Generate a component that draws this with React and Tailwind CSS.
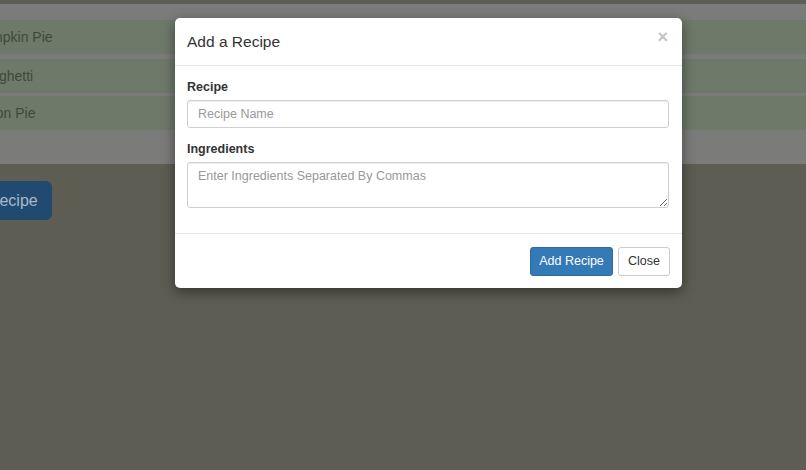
import React from "react";

export default function App() {
  const items = ["Pumpkin Pie", "Spaghetti", "Onion Pie"];
  return (
    <div
      className="relative w-[806px] h-[470px] overflow-hidden bg-[#5e5d53]"
      style={{ fontFamily: '"Liberation Sans", Arial, sans-serif' }}
    >
      {/* page behind the backdrop */}
      <div className="pt-[4px]">
        <div className="h-[160px] bg-[#7b7b7a] pt-[16px]">
          <div className="ml-[-38px] flex flex-col">
            {items.map((t, i) => (
              <div
                key={t}
                className={`h-[34px] flex items-center pl-[12px] bg-[#6e796a] text-[14px] text-[#3d4a39] ${
                  i === 0 ? "mb-[5px]" : i === 1 ? "mb-[3px]" : ""
                }`}
              >
                {t}
              </div>
            ))}
          </div>
        </div>
        <div className="mt-[17px] ml-[-59px]">
          <div className="inline-flex items-center h-[39px] px-[14px] rounded-[6px] bg-[#214a71] text-[16px] text-[#a8b9c9]">
            Add Recipe
          </div>
        </div>
      </div>

      {/* modal */}
      <div className="absolute left-[175px] top-[18px] w-[507px] bg-white rounded-[5px] shadow-[0_4px_13px_rgba(0,0,0,0.45)]">
        <div className="h-[48px] flex items-center justify-between px-[12px] border-b border-[#e5e5e5]">
          <div className="text-[15.5px] text-[#333] leading-none">Add a Recipe</div>
          <div className="text-[18px] font-bold text-[#c4c4c4] leading-none mt-[-9px] mr-[2px]">×</div>
        </div>
        <div className="px-[12px] pt-[13px] pb-[25px]">
          <div className="text-[12.5px] font-bold text-[#333] leading-[17px] mb-[4px]">Recipe</div>
          <input
            className="block w-[482px] h-[28px] border border-[#cfcfcf] rounded-[3px] px-[10px] text-[12.5px] text-[#555] placeholder:text-[#999] shadow-[inset_0_1px_1px_rgba(0,0,0,0.075)] outline-none"
            placeholder="Recipe Name"
          />
          <div className="text-[12.5px] font-bold text-[#333] leading-[17px] mt-[13px] mb-[4px]">Ingredients</div>
          <textarea
            className="block w-[482px] h-[46px] border border-[#cfcfcf] rounded-[3px] px-[10px] pt-[5px] text-[12.5px] leading-[17px] text-[#555] placeholder:text-[#999] shadow-[inset_0_1px_1px_rgba(0,0,0,0.075)] outline-none"
            placeholder="Enter Ingredients Separated By Commas"
          />
        </div>
        <div className="border-t border-[#e5e5e5] px-[12px] pt-[13px] pb-[12px] flex justify-end gap-[5px]">
          <div className="h-[29px] w-[83px] flex items-center justify-center rounded-[3px] bg-[#337ab7] border border-[#2e6da4] text-white text-[12.5px]">
            Add Recipe
          </div>
          <div className="h-[29px] w-[52px] flex items-center justify-center rounded-[3px] bg-white border border-[#ccc] text-[#333] text-[12.5px]">
            Close
          </div>
        </div>
      </div>
    </div>
  );
}
